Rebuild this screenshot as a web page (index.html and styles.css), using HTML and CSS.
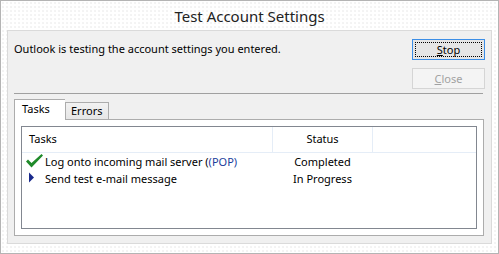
FILE: index.html
```html
<!DOCTYPE html>
<html lang="en">
<head>
  <meta charset="UTF-8" />
  <title>Test Account Settings</title>
  <link rel="stylesheet" href="styles.css">
</head>
<body>
  <div class="window">
    <div class="titlebar">Test Account Settings</div>

    <div class="panel">
      <div class="top">
        <p class="message">Outlook is testing the account settings you entered.</p>
        <div class="actions">
          <button class="btn default"><span class="focus"><u>S</u>top</span></button>
          <button class="btn" disabled><u>C</u>lose</button>
        </div>
      </div>

      <hr class="separator" />

      <div class="tabs">
        <div class="tab active">Tasks</div>
        <div class="tab">Errors</div>
      </div>

      <div class="tab-panel">
        <div class="list">
          <div class="row head">
            <div class="col task">Tasks</div>
            <div class="col status">Status</div>
            <div class="col rest"></div>
          </div>
          <div class="row">
            <div class="col task"><span class="icon"><svg width="18" height="14" viewBox="0 0 18 14"><path d="M0 7.5 L2 5.5 L5.5 9 L15.5 0 L17 1.5 L5.5 13.5 Z" fill="#1f8a2a"/></svg></span>Log onto incoming mail server (<span class="link">(POP)</span></div>
            <div class="col status">Completed</div>
          </div>
          <div class="row">
            <div class="col task"><span class="icon"><svg width="18" height="14" viewBox="0 0 18 14"><path d="M3 1.5 L8 6.5 L3 11.5 Z" fill="#1a2a8c"/></svg></span>Send test e-mail message</div>
            <div class="col status">In Progress</div>
          </div>
        </div>
      </div>
    </div>
  </div>
</body>
</html>
```

FILE: styles.css
```css
body {
  margin: 0;
  font-family: 'Noto Sans', 'Open Sans', sans-serif;
  font-size: 11px;
  color: #000;
}

.window {
  width: 499px;
  height: 254px;
  box-sizing: border-box;
  border: 1px solid #b4b4b4;
  background-color: #fff;
  background-image: radial-gradient(#e6e6e6 0.6px, transparent 0.8px);
  background-size: 4px 4px;
  padding: 0 6px;
}

.titlebar {
  height: 29px;
  line-height: 31px;
  text-align: center;
  font-size: 15px;
  color: #222;
}

.panel {
  height: 214px;
  box-sizing: border-box;
  border: 1px solid #dadada;
  background-color: #f0f0f0;
  padding: 8px 6px 0 6px;
}

.top {
  display: flex;
  justify-content: space-between;
}

.message {
  margin: 2px 0 0 0;
  line-height: 16px;
}

.actions {
  display: flex;
  flex-direction: column;
  gap: 8px;
}

.btn {
  width: 73px;
  height: 21px;
  box-sizing: border-box;
  padding: 0;
  font-family: inherit;
  font-size: 11px;
  border: 1px solid #adadad;
  background-color: #e1e1e1;
  color: #000;
}

.btn.default {
  border-color: #3c8ee6;
  background-color: #e5e5e5;
  padding: 2px;
}

.btn .focus {
  display: block;
  height: 100%;
  box-sizing: border-box;
  border: 1px dotted #000;
  line-height: 14px;
}

.btn:disabled {
  border-color: #d5d5d5;
  background-color: #f4f4f4;
  color: #a2a2a2;
}

.separator {
  margin: 4px 2px 0 0;
  border: none;
  border-top: 1px solid #a0a0a0;
  height: 0;
}

.tabs {
  display: flex;
  align-items: flex-end;
  margin-top: 5px;
  height: 20px;
  position: relative;
  z-index: 1;
}

.tab {
  box-sizing: border-box;
  height: 17px;
  width: 44px;
  padding-left: 5px;
  line-height: 15px;
  border: 1px solid #acacac;
  border-bottom: none;
  background: linear-gradient(#f2f2f2, #e6e6e6);
}

.tab.active {
  height: 21px;
  width: 51px;
  padding-left: 7px;
  line-height: 18px;
  background: #fff;
  margin-bottom: -1px;
  border-right: none;
}

.tab-panel {
  height: 117px;
  box-sizing: border-box;
  margin-right: 1px;
  border: 1px solid #acacac;
  background-color: #fff;
  padding: 6px;
}

.list {
  height: 100%;
  box-sizing: border-box;
  border: 1px solid #828790;
  background-color: #fff;
}

.row {
  display: flex;
  height: 17px;
  line-height: 17px;
}

.row.head {
  height: 25px;
  line-height: 24px;
  border-bottom: 1px solid #e5edf7;
}

.col {
  box-sizing: border-box;
  white-space: nowrap;
}

.col.task {
  width: 250px;
  padding-left: 4px;
}

.row.head .col.task {
  padding-left: 7px;
}

.col.status {
  width: 101px;
  text-align: center;
}

.row.head .col.status {
  border-left: 1px solid #e5edf7;
  border-right: 1px solid #e5edf7;
}

.icon {
  display: inline-block;
  width: 19px;
  vertical-align: -2px;
}

.icon svg {
  display: block;
}

.link {
  color: #1b3d9c;
}
```
